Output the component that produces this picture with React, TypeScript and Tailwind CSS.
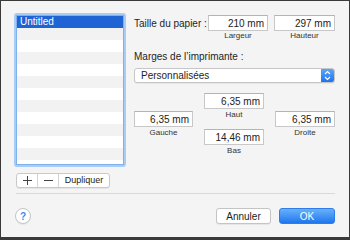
import React from "react";

const font = { fontFamily: '"Liberation Sans", Arial, sans-serif' };

const Field = ({ value, w = "w-[60px]" }: { value: string; w?: string }) => (
  <div
    className={`${w} h-[16px] bg-white border border-[#c8c8c8] border-t-[#b4b4b4] flex items-center justify-end pr-[3px] text-[10px] text-[#222]`}
  >
    {value}
  </div>
);

const Caption = ({ children }: { children: React.ReactNode }) => (
  <div className="text-[8px] leading-[10px] text-[#333] text-center">{children}</div>
);

export default function App() {
  const rows = Array.from({ length: 13 }, (_, i) => i);

  return (
    <div
      style={font}
      className="w-[350px] h-[240px] bg-[#f4f4f4] border-l border-t border-r border-b-[3px] border-[#3a3a3a] flex flex-col overflow-hidden"
    >
      <div className="flex pt-[12px] pl-[13px] pr-[14px]">
        {/* left column */}
        <div className="flex flex-col w-[112px]">
          <div className="h-[154px] border-2 border-[#a9ccf4] rounded-[3px]">
            <div className="h-full border border-[#7fb1ee] bg-white overflow-hidden">
              {rows.map((i) => (
                <div
                  key={i}
                  className={`h-[12px] text-[10px] leading-[12px] pl-[3px] ${
                    i === 0
                      ? "bg-[#1f63d5] text-white"
                      : i % 2 === 1
                      ? "bg-[#f2f2f2]"
                      : "bg-white"
                  }`}
                >
                  {i === 0 ? "Untitled" : ""}
                </div>
              ))}
            </div>
          </div>
          <div className="mt-[6px] ml-[2px] w-[94px] h-[15px] flex bg-white border border-[#c9c9c9] rounded-[3px] shadow-[0_1px_0_rgba(0,0,0,0.06)]">
            <div className="w-[21px] flex items-center justify-center border-r border-[#d4d4d4]">
              <svg width="9" height="9" viewBox="0 0 9 9">
                <path d="M4.5 0v9M0 4.5h9" stroke="#444" strokeWidth="1" />
              </svg>
            </div>
            <div className="w-[21px] flex items-center justify-center border-r border-[#d4d4d4]">
              <svg width="9" height="9" viewBox="0 0 9 9">
                <path d="M0 4.5h9" stroke="#444" strokeWidth="1" />
              </svg>
            </div>
            <div className="flex-1 flex items-center justify-center text-[9px] text-[#222]">
              Dupliquer
            </div>
          </div>
        </div>

        {/* right column */}
        <div className="flex-1 ml-[8px] flex flex-col">
          <div className="mt-[2px] flex items-center">
            <div className="flex-1 text-[10px] text-[#1e1e1e]">Taille du papier :</div>
            <Field value="210 mm" />
            <div className="w-[6px]" />
            <Field value="297 mm" w="w-[61px]" />
          </div>
          <div className="flex">
            <div className="flex-1" />
            <div className="w-[60px]">
              <Caption>Largeur</Caption>
            </div>
            <div className="w-[6px]" />
            <div className="w-[61px]">
              <Caption>Hauteur</Caption>
            </div>
          </div>

          <div className="mt-[10px] text-[10px] leading-[12px] text-[#1e1e1e]">
            Marges de l’imprimante :
          </div>
          <div className="mt-[5px] h-[15px] flex bg-white border border-[#c6c6c6] rounded-[3px] overflow-hidden shadow-[0_1px_0_rgba(0,0,0,0.05)]">
            <div className="flex-1 flex items-center pl-[6px] text-[10px] text-[#1e1e1e]">
              Personnalisées
            </div>
            <div className="w-[13px] bg-gradient-to-b from-[#5aa5f8] to-[#1c73ec] flex items-center justify-center">
              <svg width="7" height="11" viewBox="0 0 7 11">
                <path d="M1 4l2.5-2.5L6 4M1 7l2.5 2.5L6 7" fill="none" stroke="#fff" strokeWidth="1.1" />
              </svg>
            </div>
          </div>

          <div className="mt-[10px] grid grid-cols-[59px_60px_60px] gap-x-[11px] items-center">
            <div className="flex flex-col">
              <Field value="6,35 mm" w="w-[59px]" />
              <div className="mt-[1px]">
                <Caption>Gauche</Caption>
              </div>
            </div>
            <div className="flex flex-col">
              <Field value="6,35 mm" />
              <div className="mt-[1px]">
                <Caption>Haut</Caption>
              </div>
              <div className="mt-[9px]">
                <Field value="14,46 mm" />
              </div>
              <div className="mt-[1px]">
                <Caption>Bas</Caption>
              </div>
            </div>
            <div className="flex flex-col">
              <Field value="6,35 mm" />
              <div className="mt-[1px]">
                <Caption>Droite</Caption>
              </div>
            </div>
          </div>
        </div>
      </div>

      <div className="mt-[5px] ml-[15px] mr-[14px] h-px bg-[#dadada]" />

      <div className="mt-[14px] flex items-center px-[14px]">
        <div className="w-[16px] h-[16px] rounded-full bg-white border border-[#c4c4c4] flex items-center justify-center text-[10px] font-bold text-[#3b8cf2] shadow-[0_1px_0_rgba(0,0,0,0.05)]">
          ?
        </div>
        <div className="flex-1" />
        <div className="w-[55px] h-[16px] bg-white border border-[#c4c4c4] rounded-[3px] flex items-center justify-center text-[10px] text-[#222] shadow-[0_1px_0_rgba(0,0,0,0.06)]">
          Annuler
        </div>
        <div className="w-[8px]" />
        <div className="w-[56px] h-[16px] rounded-[3px] bg-gradient-to-b from-[#68b0fa] to-[#1d76ee] border border-[#2d7ded] flex items-center justify-center text-[10px] text-white">
          OK
        </div>
      </div>
    </div>
  );
}
